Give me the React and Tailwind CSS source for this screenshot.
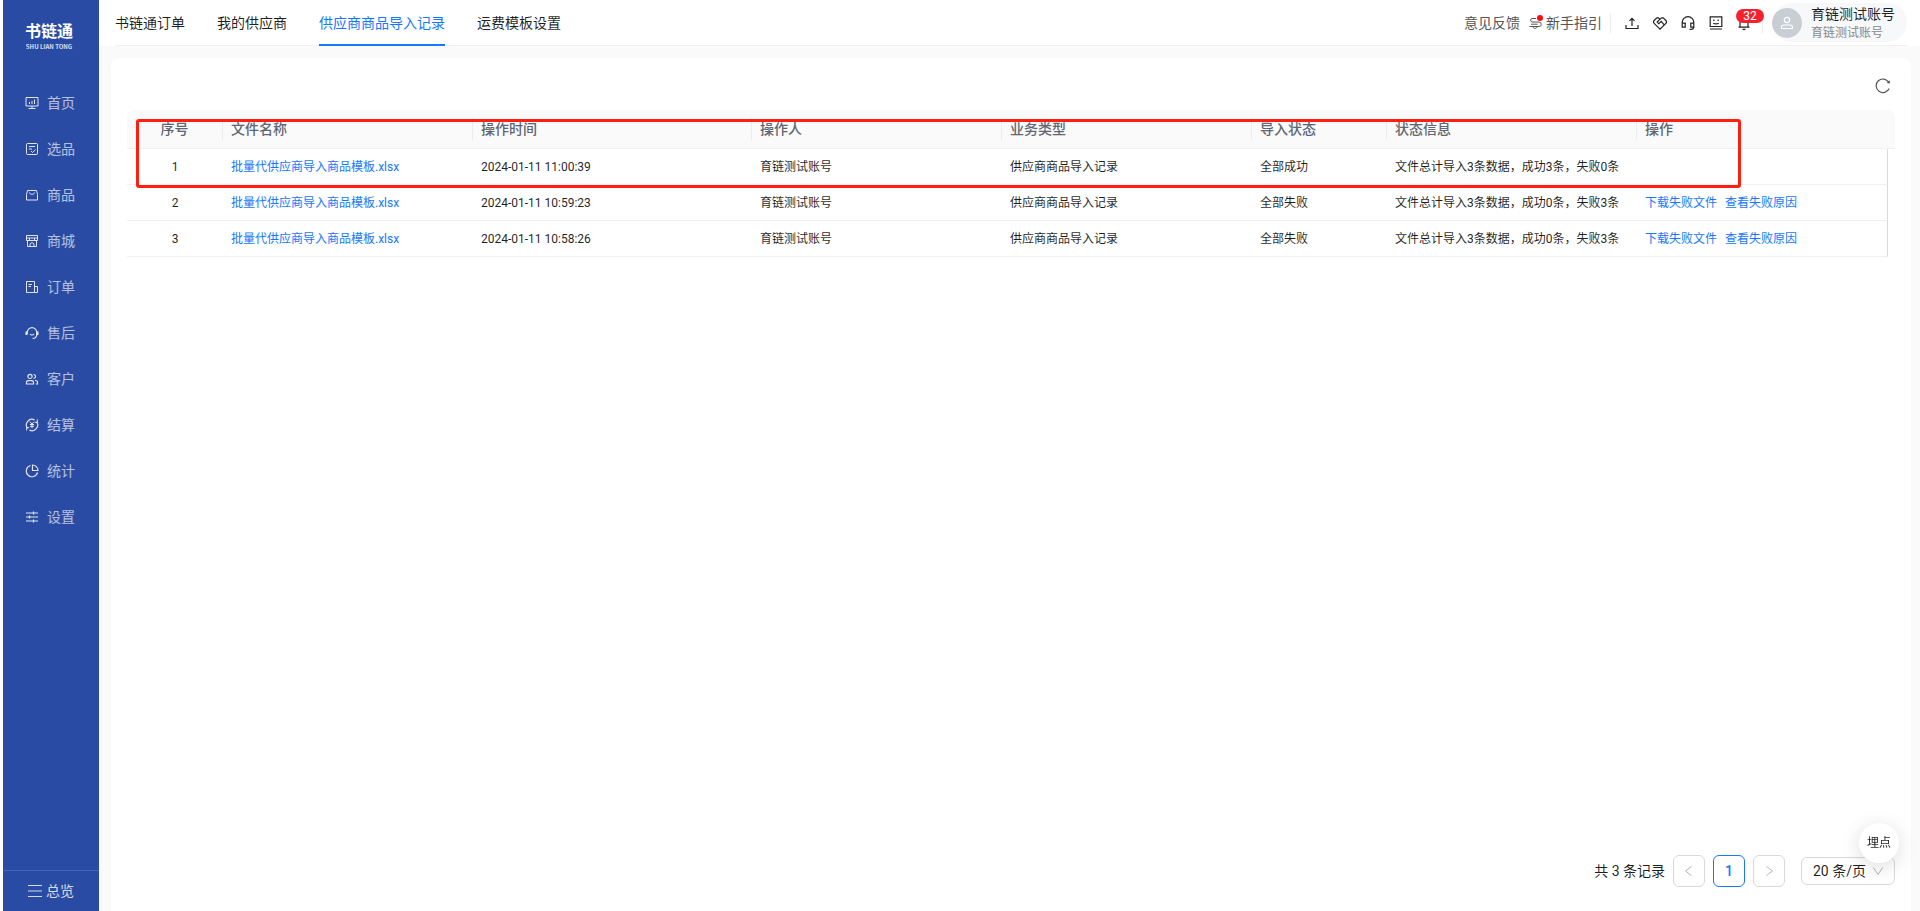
import { useState } from "react";

function Icon({ size = 14, viewBox = "0 0 14 14", strokeWidth = 1, className = "", children }) {
  return (
    <svg
      width={size}
      height={size}
      viewBox={viewBox}
      fill="none"
      stroke="currentColor"
      strokeWidth={strokeWidth}
      className={`shrink-0 ${className}`}
      aria-hidden="true"
    >
      {children}
    </svg>
  );
}

const menu = [
  {
    label: "首页",
    icon: <path d="M1 1.500h12v8.500H1zM7 10v2.500M3.500 12.500h7M4.500 6v2M7 5v3M9.500 3.500V8" />,
  },
  {
    label: "选品",
    icon: <path d="M2.500 1.500h9a1 1 0 0 1 1 1v9a1 1 0 0 1-1 1h-9a1 1 0 0 1-1-1v-9a1 1 0 0 1 1-1zM4 4.500h6M4 7h3M6 9l1.500 1.500L10.500 7.500" />,
  },
  {
    label: "商品",
    icon: <path d="M2.500 2.500h9l1 4v5.500h-11V6.500zM4.500 4.500c.5 2.500 4.500 2.500 5 0" />,
  },
  {
    label: "商城",
    icon: <path d="M1.500 1.500h11v5h-11zM1.500 4h11M4.500 4v2.500M9.500 4v2.500M2.500 6.500v6h9v-6M5 12.500V10l2-1.500L9 10v2.500" />,
  },
  {
    label: "订单",
    icon: <path d="M1.500 1.500h8v11h-8zM9.500 6.500h3v6h-3M3.500 4.500h3.500M3.500 6.500h2.500" />,
  },
  {
    label: "售后",
    icon: (
      <>
        <path d="M2.200 8V6.500a4.800 4.800 0 0 1 9.600 0V8c0 3-1.800 4.500-4.300 4.500M5 8c1 1.300 3 1.300 4 0" strokeWidth="1.200" />
        <path d="M1.500 5.500v3.500M12.500 5.500v3.500" strokeWidth="2" />
      </>
    ),
  },
  {
    label: "客户",
    icon: (
      <path
        d="M5 2.300a2 2 0 1 1 0 4.200 2 2 0 0 1 0-4.200zM1.500 12v-1.500c0-1 .8-1.800 2-1.800h3c1.200 0 2 .8 2 1.800V12zM8.500 2.500a2 2 0 0 1 0 4M10 8.500c1.500 0 2.500.8 2.500 1.800V12H10.800"
        strokeWidth="1.200"
      />
    ),
  },
  {
    label: "结算",
    icon: (
      <>
        <path d="M2.300 10.200A5.700 5.700 0 0 1 9.500 1.900M11.700 3.800a5.700 5.700 0 0 1-7.200 8.300" strokeWidth="1.200" />
        <path d="M12.300 1.500v2.800H9.800M1.700 12.500V9.700h2.500" />
        <path d="M5 3.800l2 2.200 2-2.200M7 6v4.200M5 6.500h4M5 8.300h4" />
      </>
    ),
  },
  {
    label: "统计",
    icon: <path d="M5.500 1.500a5.700 5.700 0 1 0 7 7M7.500 1v5.500H13A5.500 5.500 0 0 0 7.500 1z" strokeWidth="1.200" />,
  },
  {
    label: "设置",
    icon: <path d="M1 3h12M1 7h12M1 11h12M8.500 1.500v3M4.500 5.500v3M8.500 9.500v3" strokeWidth="1.200" />,
  },
];

const tabs = ["书链通订单", "我的供应商", "供应商商品导入记录", "运费模板设置"];

const tools = [
  {
    label: "上传",
    icon: <path d="M1 9v3.500h12V9M7 10V2.500M4.500 4.800L7 2.300l2.500 2.500" />,
  },
  {
    label: "合作",
    icon: <path d="M7 13.200L.6 6.800V5L3.800 1.800h1.500L7 3.200l1.700-1.400h1.500L13.400 5v1.800zM7 3.200L4.200 6l1.600 1.600 2.400-2.200 2.800 3.200" />,
  },
  {
    label: "客服",
    icon: <path d="M1.200 11V6.500a5.800 5.800 0 0 1 11.600 0V11M1.200 7.200h3v4h-3zM9.800 7.200h3v4h-3zM12.800 11c0 1.700-1.800 2.500-4.300 2.500" />,
  },
  {
    label: "助手",
    icon: <path d="M1.200.8h11.600v9.700H1.200zM1 13h12M4.800 3.500V5M9.200 3.500V5M4.200 7.200c1.800.8 3.800.8 5.600 0" />,
  },
];

const columns = [
  { title: "序号", width: "w-[96px]" },
  { title: "文件名称", width: "w-[250px]" },
  { title: "操作时间", width: "w-[279px]" },
  { title: "操作人", width: "w-[250px]" },
  { title: "业务类型", width: "w-[250px]" },
  { title: "导入状态", width: "w-[135px]" },
  { title: "状态信息", width: "w-[250px]" },
  { title: "操作", width: "" },
];

const records = [
  { id: 1, time: "2024-01-11 11:00:39", status: "全部成功", info: "文件总计导入3条数据，成功3条，失败0条", failed: false },
  { id: 2, time: "2024-01-11 10:59:23", status: "全部失败", info: "文件总计导入3条数据，成功0条，失败3条", failed: true },
  { id: 3, time: "2024-01-11 10:58:26", status: "全部失败", info: "文件总计导入3条数据，成功0条，失败3条", failed: true },
];

function Sidebar() {
  return (
    <aside className="ml-[3px] flex w-24 shrink-0 flex-col bg-[#294ba3] text-white">
      <div className="flex h-20 flex-col items-center pt-5 pr-1">
        <div className="text-base leading-6 font-bold">书链通</div>
        <div className="font-['Noto_Sans_CJK_SC',sans-serif] text-[6px] leading-none font-bold text-white/80">SHU LIAN TONG</div>
      </div>
      <nav className="flex flex-1 flex-col">
        {menu.map((m) => (
          <a key={m.label} href="#" className="flex h-[46px] items-center gap-2 pl-[22px] text-sm text-white/65">
            <Icon className="text-white/85">{m.icon}</Icon>
            {m.label}
          </a>
        ))}
      </nav>
      <button type="button" className="flex h-[41px] items-center gap-1 border-t border-white/15 pl-[25px] text-sm text-white/80">
        <Icon>
          <path d="M0 1.500h14M0 7h14M0 12.500h14" />
        </Icon>
        总览
      </button>
    </aside>
  );
}

function Header() {
  return (
    <header className="bg-white pr-[13px] pl-4">
      <div className="flex h-[46px] justify-between border-b border-[#f0f0f0]">
        <nav className="flex gap-8">
          {tabs.map((t, i) => (
            <a
              key={t}
              href="#"
              className={`-mb-px flex items-center pt-px text-sm ${
                i === 2 ? "border-b-2 border-[#1677ff] text-[#1677ff]" : "border-b-2 border-transparent text-black/88"
              }`}
            >
              {t}
            </a>
          ))}
        </nav>
        <div className="flex items-center text-sm text-[#555]">
          <a href="#">意见反馈</a>
          <a href="#" className="ml-2 flex items-center gap-1">
            <span className="relative">
              <Icon>
                <path d="M8 2.500H4a1.800 1.800 0 0 0 0 3.500h7a2 2 0 0 1 0 4.500H1.500M3 8.200h6.500M5 10.500c0 2.500 4 2.500 4 0" />
              </Icon>
              <span className="absolute -top-px -right-px size-1.5 rounded-full bg-[#ff0a0a]" />
            </span>
            新手指引
          </a>
          <span className="mx-2 h-5 w-px bg-[#ececec]" />
          <div className="ml-1.5 flex items-center gap-3.5 text-[#222]">
            {tools.map((t) => (
              <button key={t.label} type="button" aria-label={t.label}>
                <Icon strokeWidth={1.2}>{t.icon}</Icon>
              </button>
            ))}
            <button type="button" aria-label="消息" className="relative">
              <Icon strokeWidth={1.2}>
                <path d="M3 11V6a4 4 0 0 1 8 0v5M1.500 11.200h11M5.500 13.300h3" />
              </Icon>
              <span className="absolute -top-[7px] -left-px h-3.5 w-7 rounded-full bg-[#f5222d] text-center text-xs leading-[14px] text-white">
                32
              </span>
            </button>
          </div>
          <span className="ml-[11px] h-5 w-px bg-[#ececec]" />
          <a href="#" className="ml-[9px] flex h-[39px] items-center gap-[9px] rounded-full bg-[#f7f8fa] pr-3">
            <span className="flex size-[30px] items-center justify-center rounded-full bg-[#c9cdd4] text-white">
              <Icon strokeWidth={1.2}>
                <circle cx="7" cy="4" r="2.700" />
                <path d="M1.500 12.500v-1c0-1.500 1-2.500 2.500-2.500h6c1.500 0 2.500 1 2.500 2.500v1z" />
              </Icon>
            </span>
            <span className="flex flex-col">
              <span className="text-sm leading-5 text-black/88">育链测试账号</span>
              <span className="text-xs leading-[18px] text-[#888]">育链测试账号</span>
            </span>
          </a>
        </div>
      </div>
    </header>
  );
}

function RecordTable() {
  return (
    <div className="relative">
      <table className="w-full table-fixed border-separate border-spacing-0 text-left">
        <thead>
          <tr className="h-[39px] text-sm text-[#5f6673]">
            {columns.map((c, i) => (
              <th
                key={c.title}
                className={`border-b border-[#f0f0f0] bg-[#fafafa] p-0 font-medium ${c.width} ${i === 0 ? "rounded-tl-lg" : ""}`}
              >
                <div
                  className={`flex h-[22px] items-center ${i === 0 ? "justify-center" : "pl-2"} ${
                    i < columns.length - 1 ? "border-r border-[#ececec]" : ""
                  }`}
                >
                  {c.title}
                </div>
              </th>
            ))}
            <td className="w-[7px] rounded-tr-lg border-b border-[#f0f0f0] bg-[#fafafa] p-0" />
          </tr>
        </thead>
        <tbody>
          {records.map((r) => (
            <tr key={r.id} className="h-9 text-xs text-black/88 [&>td]:border-b [&>td]:border-[#f0f0f0] [&>td]:px-2 [&>td]:py-0">
              <td className="text-center">{r.id}</td>
              <td>
                <a href="#" className="text-[#1677ff]">批量代供应商导入商品模板.xlsx</a>
              </td>
              <td>{r.time}</td>
              <td>育链测试账号</td>
              <td>供应商商品导入记录</td>
              <td>{r.status}</td>
              <td className="whitespace-nowrap">{r.info}</td>
              <td className="border-r border-r-[#d9d9d9]!">
                {r.failed && (
                  <div className="flex gap-2 text-[#1677ff]">
                    <a href="#">下载失败文件</a>
                    <a href="#">查看失败原因</a>
                  </div>
                )}
              </td>
            </tr>
          ))}
        </tbody>
      </table>
      {/* highlight frame over the header and first row */}
      <div className="pointer-events-none absolute top-[9px] right-[154px] left-[9px] h-[69px] rounded-[3px] border-3 border-[#ff1f10]" />
    </div>
  );
}

function Pagination() {
  const [size, setSize] = useState("20");
  const box = "flex size-8 items-center justify-center rounded-md border";

  return (
    <div className="flex items-center justify-end gap-2 text-sm text-black/88">
      <span>共 3 条记录</span>
      <button type="button" aria-label="上一页" className={`${box} border-[#d9d9d9] text-black/35`}>
        <Icon size={12}><path d="M10 1.500L3 7l7 5.500" /></Icon>
      </button>
      <button type="button" className={`${box} border-[#1677ff] font-medium text-[#1677ff]`}>1</button>
      <button type="button" aria-label="下一页" className={`${box} border-[#d9d9d9] text-black/35`}>
        <Icon size={12}><path d="M4 1.500l7 5.500-7 5.500" /></Icon>
      </button>
      <div className="relative ml-2">
        <select
          aria-label="每页条数"
          value={size}
          onChange={(e) => setSize(e.target.value)}
          className="h-7 w-[94px] appearance-none rounded-md border border-[#d9d9d9] bg-white pl-[11px] text-sm"
        >
          <option value="20">20 条/页</option>
          <option value="50">50 条/页</option>
        </select>
        <Icon size={12} className="pointer-events-none absolute top-2 right-[11px] text-black/35">
          <path d="M1.500 3L7 11l5.500-8" />
        </Icon>
      </div>
    </div>
  );
}

export default function App() {
  return (
    <div className="flex min-h-screen bg-white font-[Roboto,'Noto_Sans_CJK_SC',sans-serif]">
      <Sidebar />
      <div className="flex min-w-0 flex-1 flex-col bg-[#fafafa]">
        <Header />
        <main className="mt-3 mr-[9px] ml-3 flex flex-1 flex-col rounded-t-lg bg-white px-4 pt-4 pb-6">
          <div className="mb-3 flex h-6 items-center justify-end pr-1">
            <button type="button" aria-label="刷新" className="text-[#555]">
              <Icon size={16} viewBox="0 0 16 16" strokeWidth={1.2}>
                <path d="M14.200 10.500A6.800 6.800 0 1 1 13.800 4.300" />
                <path d="M14.800 2.200v3.300l-3.200-.4z" fill="currentColor" stroke="none" />
              </Icon>
            </button>
          </div>
          <RecordTable />
          <div className="mt-auto">
            <Pagination />
          </div>
        </main>
      </div>
      <button
        type="button"
        className="fixed right-[21px] bottom-12 size-10 rounded-full bg-white text-xs text-black/88 shadow-[0_4px_20px_rgba(0,0,0,0.14)]"
      >
        埋点
      </button>
    </div>
  );
}
